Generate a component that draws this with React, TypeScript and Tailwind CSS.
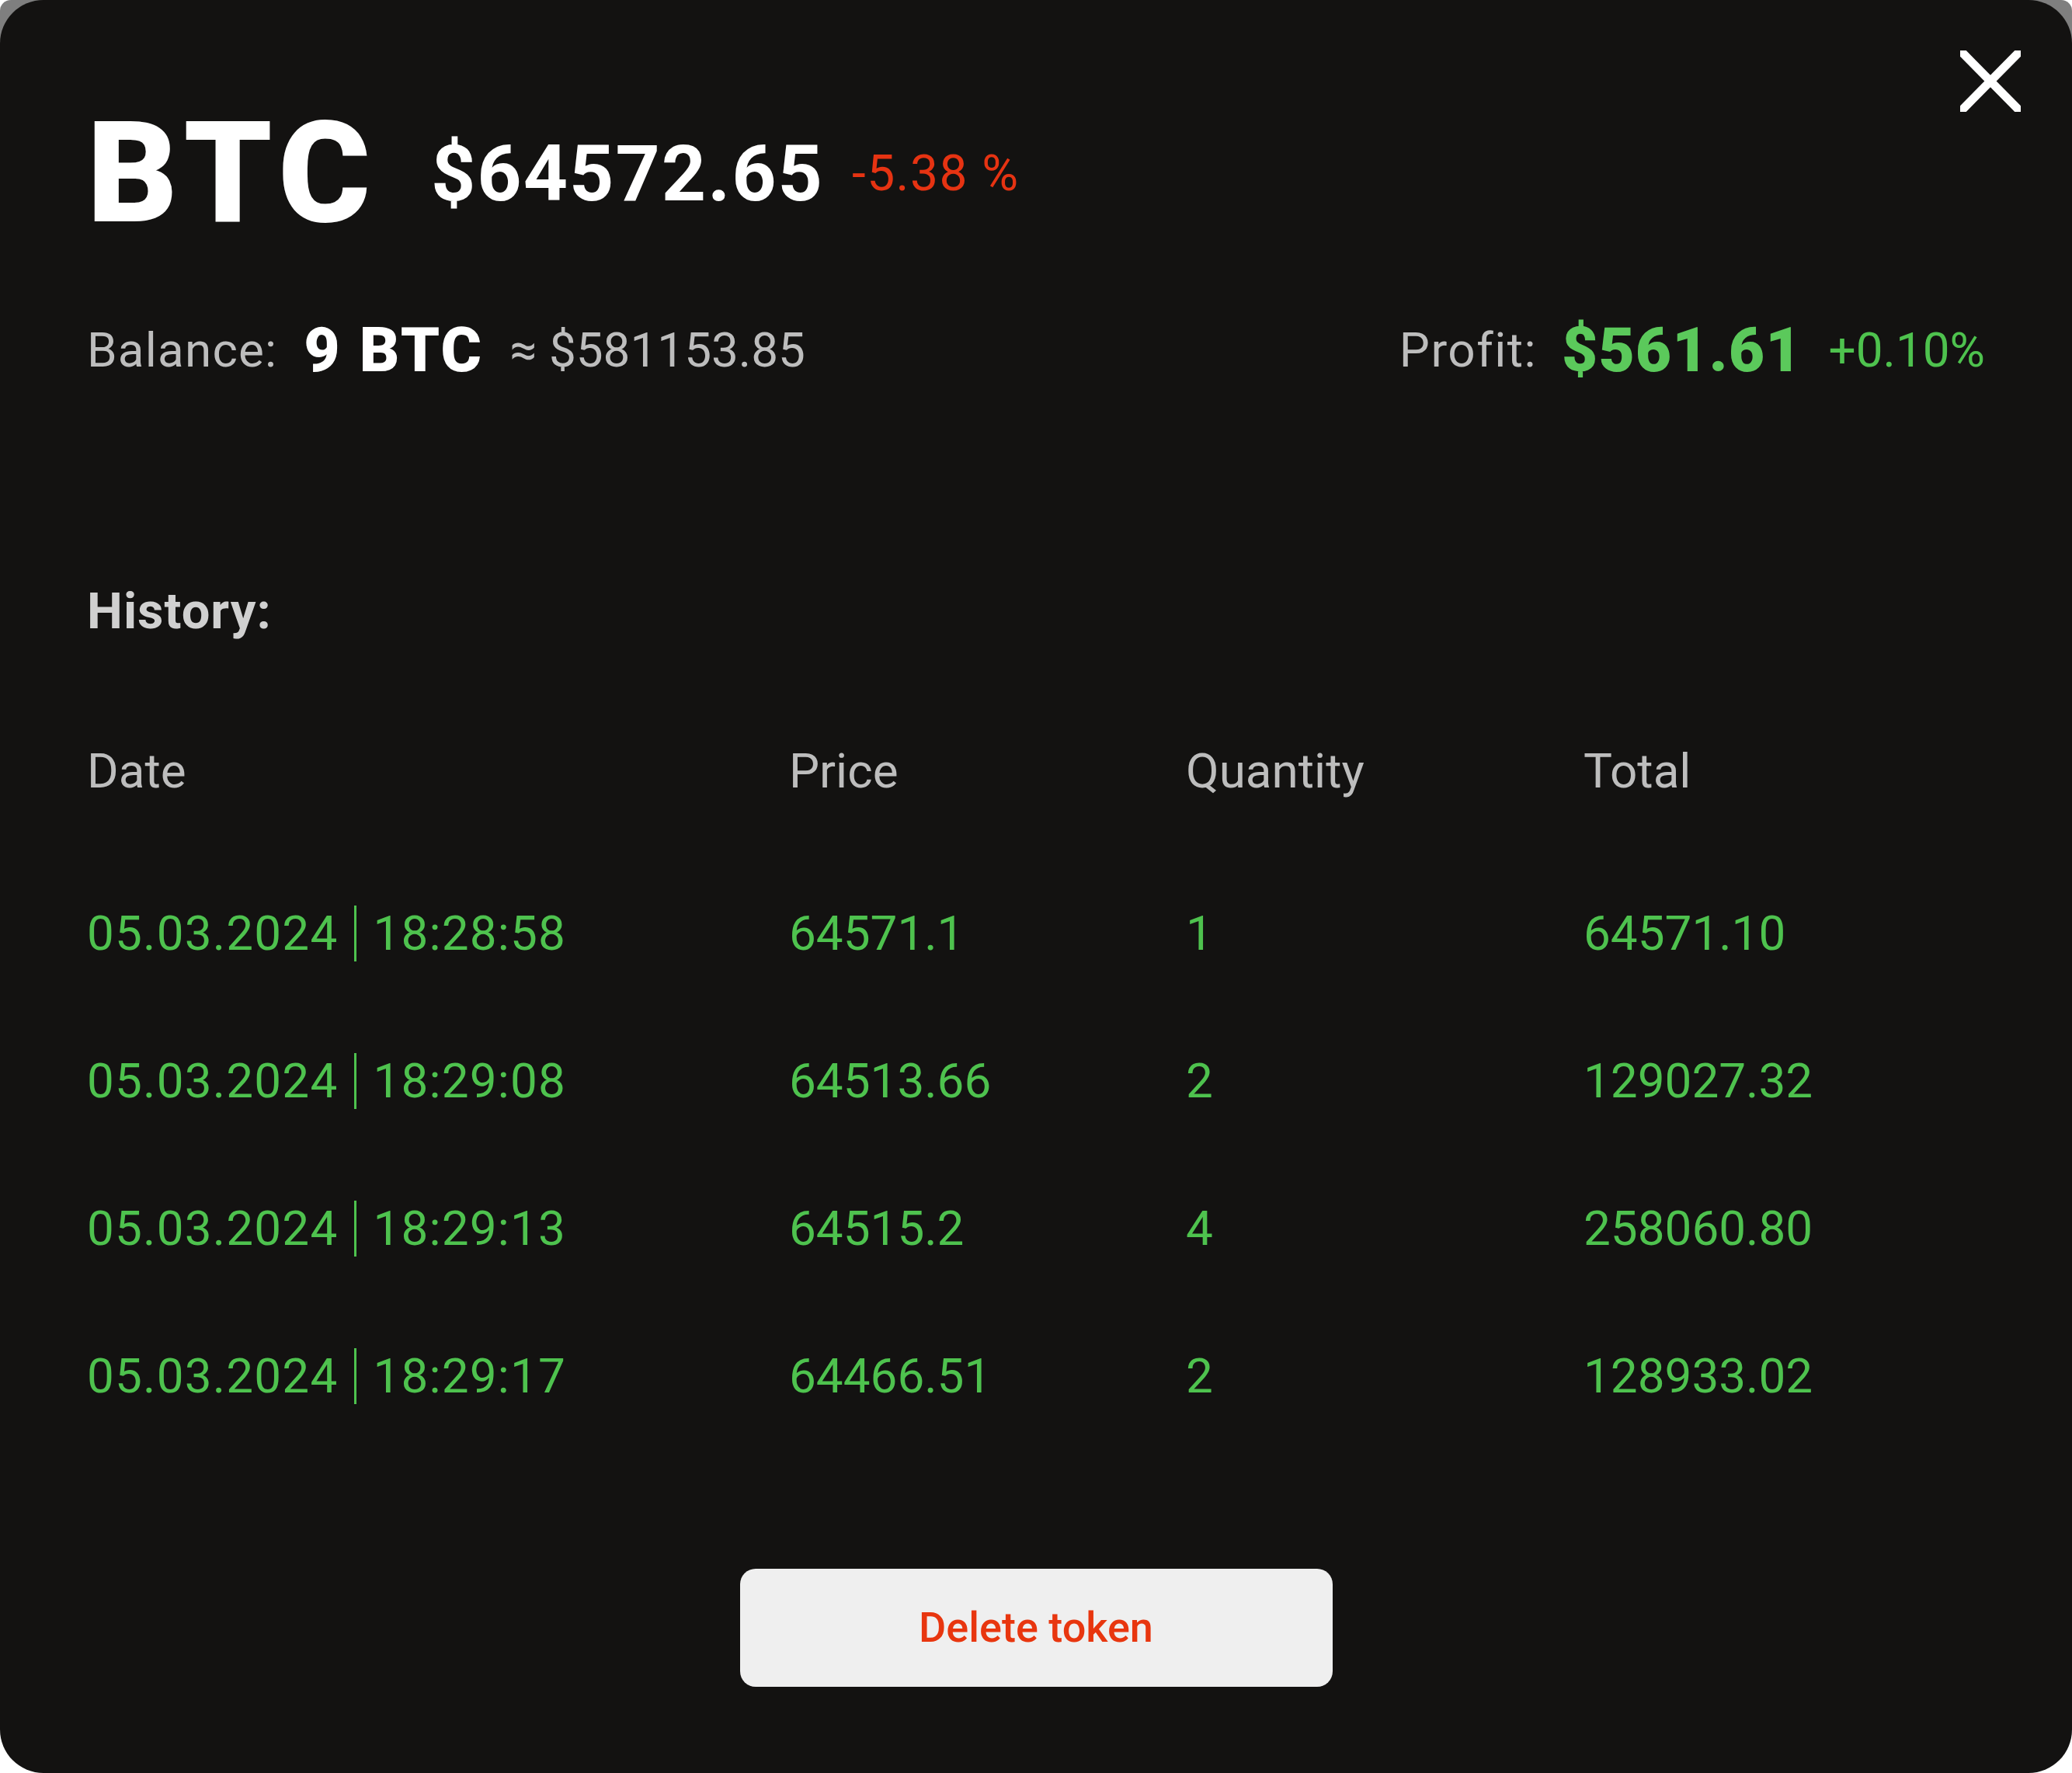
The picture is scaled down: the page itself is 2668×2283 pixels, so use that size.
import React from "react";

const rows = [
  { date: "05.03.2024", time: "18:28:58", price: "64571.1", qty: "1", total: "64571.10" },
  { date: "05.03.2024", time: "18:29:08", price: "64513.66", qty: "2", total: "129027.32" },
  { date: "05.03.2024", time: "18:29:13", price: "64515.2", qty: "4", total: "258060.80" },
  { date: "05.03.2024", time: "18:29:17", price: "64466.51", qty: "2", total: "128933.02" },
];

export default function App() {
  return (
    <div className="min-h-screen w-full bg-white font-['Roboto',sans-serif]">
      <div className="rounded-t-[14px] bg-[linear-gradient(to_bottom,#7f7f7f_0%,#7f7f7f_50%,#ffffff_50%)]">
        <div className="relative flex flex-col rounded-[56px] bg-[#131211] pl-[112px] pr-[112px] pt-[133px] pb-[111px]">
          <button className="absolute right-[66px] top-[65px] h-[79px] w-[78px]" aria-label="Close">
            <svg viewBox="0 0 78 79" className="block h-full w-full">
              <line x1="0" y1="0" x2="78" y2="79" stroke="#ffffff" strokeWidth="11" />
              <line x1="78" y1="0" x2="0" y2="79" stroke="#ffffff" strokeWidth="11" />
            </svg>
          </button>

          <div className="flex h-[181px] items-center">
            <span className="text-[181px] font-black leading-none tracking-[10px] text-white">BTC</span>
            <span className="ml-[68px] text-[100px] font-bold leading-none tracking-[2px] text-white">$64572.65</span>
            <span className="ml-[36px] text-[64px] leading-none tracking-[1.5px] text-[#e63312]">-5.38 %</span>
          </div>

          <div className="mt-[97px] flex h-[80px] items-center justify-between">
            <div className="flex items-center">
              <span className="text-[62px] leading-none tracking-[1.2px] text-[#bdbdbd]">Balance:</span>
              <span className="ml-[34px] text-[80px] font-black leading-none tracking-[2.5px] text-white">9 BTC</span>
              <span className="ml-[34px] text-[62px] leading-none text-[#bdbdbd]">≈ $581153.85</span>
            </div>
            <div className="flex items-center">
              <span className="text-[62px] leading-none tracking-[1.5px] text-[#bdbdbd]">Profit:</span>
              <span className="ml-[32px] text-[80px] font-black leading-none tracking-[1px] text-[#5bc95b]">$561.61</span>
              <span className="ml-[34px] text-[62px] leading-none text-[#4ec24e]">+0.10%</span>
            </div>
          </div>

          <div className="mt-[264px] h-[64px] text-[65px] font-bold leading-none tracking-[1px] text-[#d0d0d0]">History:</div>

          <div className="mt-[143px] grid h-[62px] grid-cols-[904px_511px_512px_1fr] text-[62px] leading-none text-[#bdbdbd]">
            <span>Date</span>
            <span>Price</span>
            <span>Quantity</span>
            <span>Total</span>
          </div>

          <div className="mt-[142px] flex flex-col gap-[118px]">
            {rows.map((r, i) => (
              <div
                key={i}
                className="grid h-[72px] grid-cols-[904px_511px_512px_1fr] items-center text-[62px] leading-none text-[#4ec24e]"
              >
                <span className="flex items-center tracking-[1.2px]">
                  <span>{r.date}</span>
                  <span className="ml-[21px] mr-[21px] h-[72px] w-[3px] bg-[#4ec24e]" />
                  <span>{r.time}</span>
                </span>
                <span>{r.price}</span>
                <span>{r.qty}</span>
                <span>{r.total}</span>
              </div>
            ))}
          </div>

          <button className="mt-[212px] flex h-[152px] w-[763px] items-center justify-center self-center rounded-[20px] bg-[#efefef] text-[54px] font-medium leading-none text-[#e8360f]">
            Delete token
          </button>
        </div>
      </div>
    </div>
  );
}
